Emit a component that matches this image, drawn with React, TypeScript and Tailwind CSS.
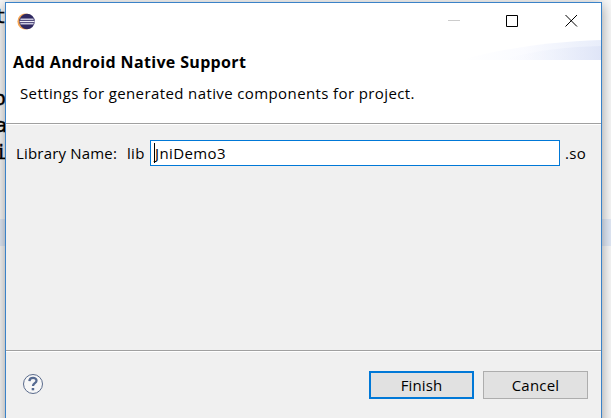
import React from "react";

function EclipseLogo() {
  return (
    <svg width="18" height="17" viewBox="0 0 18 17" className="mt-[10px] ml-[11px]">
      <circle cx="8.4" cy="8.5" r="8" fill="#f5a553" />
      <circle cx="10" cy="8.5" r="7.8" fill="#2f2860" />
      <path d="M3.4 6.3H16.6M2.8 8.5H17.4M3.4 10.7H16.6" stroke="#c9c7de" strokeWidth="1.6" />
      <path d="M2.8 8.5H17.4" stroke="#efeef6" strokeWidth="1" />
    </svg>
  );
}

function BannerArt() {
  return (
    <svg width="140" height="20" viewBox="0 0 140 20" className="ml-auto">
      <defs>
        <linearGradient id="sweep">
          <stop offset="0" stopColor="#ffffff" />
          <stop offset=".45" stopColor="#fafbff" />
          <stop offset="1" stopColor="#e8edfa" />
        </linearGradient>
        <linearGradient id="glow">
          <stop offset="0" stopColor="#f8faff" stopOpacity="0" />
          <stop offset="1" stopColor="#dfe5f7" />
        </linearGradient>
      </defs>
      <path d="M0 20C40 9 85 2 140 0V20Z" fill="url(#sweep)" />
      <path d="M40 20C75 10 105 7 140 6V20Z" fill="url(#glow)" />
    </svg>
  );
}

function EditorBehind() {
  return (
    <div className="absolute inset-0 bg-[#f8f8f8] font-['DejaVu_Sans_Mono',monospace] text-[20px] leading-[24px] [-webkit-text-stroke:0.4px_#000]">
      <div className="absolute top-[219px] h-[27px] w-full bg-[#e2eaf7]" />
      <span className="absolute top-[4px] -left-[6px]">t</span>
      <span className="absolute top-[86px] -left-[6px]">o</span>
      <span className="absolute top-[113px] -left-[5px]">a</span>
      <span className="absolute top-[140px] -left-[5px]">i</span>
    </div>
  );
}

export default function App() {
  return (
    <div className="relative h-[418px] w-[611px] overflow-hidden font-['Open_Sans','Noto_Sans',sans-serif] text-[15px] leading-5 text-black">
      <EditorBehind />
      <main className="relative mt-[2px] ml-[5px] flex h-[430px] w-[597px] flex-col border border-[#3a82c8] bg-[#f0f0f0] shadow-[0_3px_12px_rgba(0,0,0,0.4)]">
        <header className="h-[120px] shrink-0 bg-white">
          <div className="flex h-[37px]">
            <EclipseLogo />
            <svg width="130" height="13" viewBox="0 0 130 13" className="mt-[11px] mr-[23px] ml-auto" fill="none">
              <path d="M0 6.5H12" stroke="#ccc" />
              <path d="M58.5 1.5H69.5V12.5H58.5Z" stroke="#000" />
              <path d="M117.5 1L129 12.5M129 1L117.5 12.5" stroke="#000" />
            </svg>
          </div>
          <div className="flex h-[83px]">
            <div className="whitespace-nowrap">
              <h1 className="mt-[12px] ml-[7px] text-[16px] leading-5 font-bold tracking-[0.34px]">Add Android Native Support</h1>
              <p className="mt-[11px] ml-[14px] tracking-[0.39px]">Settings for generated native components for project.</p>
            </div>
            <BannerArt />
          </div>
        </header>
        <section className="h-[227px] shrink-0 border-t border-[#a0a0a0]">
          <div className="flex items-center border-t border-white pt-[15px] whitespace-nowrap">
            <span className="ml-[10px] w-[111px] tracking-[0.18px]">Library Name:</span>
            <span className="w-[23px] tracking-[0.3px]">lib</span>
            <div className="flex h-[26px] w-[410px] items-center border border-[#0078d7] bg-white pl-[3px]">
              <i className="h-5 w-px bg-black" />
              <span className="tracking-[0.4px]">JniDemo3</span>
            </div>
            <span className="ml-[5px] tracking-[0.3px]">.so</span>
          </div>
        </section>
        <footer className="shrink-0 border-t border-[#a0a0a0]">
          <div className="flex border-t border-white pt-[19px] pr-[13px] pl-[16px]">
            <svg width="22" height="22" viewBox="0 0 22 22" className="mt-[2px]" fill="none">
              <circle cx="11" cy="11" r="9.5" fill="#f7f7f7" stroke="#5a6b8c" />
              <path d="M7.4 8.1C7.6 3.8 14.6 4 14.5 7.8C14.4 10.2 11 10.2 11 13" stroke="#566a91" strokeWidth="2.3" />
              <path d="M9.7 15H12.2V17.3H9.7Z" fill="#566a91" />
            </svg>
            <button className="mr-[9px] ml-auto h-7 w-[105px] border-2 border-[#0078d7] bg-[#e1e1e1] leading-6 tracking-[0.1px]">Finish</button>
            <button className="h-7 w-[105px] border border-[#adadad] bg-[#e1e1e1] leading-[26px] tracking-[0.2px]">Cancel</button>
          </div>
        </footer>
      </main>
    </div>
  );
}
